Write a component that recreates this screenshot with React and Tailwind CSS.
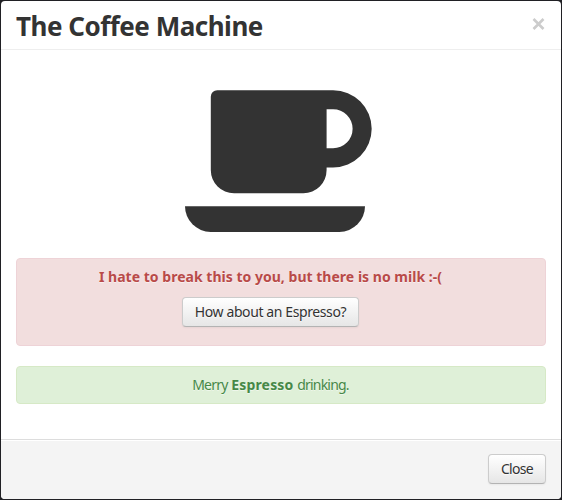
const button =
  "h-[30px] rounded border border-[#cccccc] border-b-[#b3b3b3] bg-gradient-to-b from-white to-[#e6e6e6] text-[14px] leading-5 text-[#333333] whitespace-nowrap shadow-[inset_0_1px_0_rgba(255,255,255,0.2),0_1px_2px_rgba(0,0,0,0.05)] [text-shadow:0_1px_1px_rgba(255,255,255,0.75)]";

function CoffeeIcon() {
  return (
    <svg className="block h-[142px] w-[187px]" viewBox="185 90 187 142" fill="#333333" aria-hidden="true">
      <path
        fillRule="evenodd"
        d="M217.400 90.200H333.100A38.600 38.600 0 0 1 333.100 167.400H326.600V170.100A23.200 23.200 0 0 1 303.400 193.300H234.000A23.200 23.200 0 0 1 210.800 170.100V96.700A6.500 6.500 0 0 1 217.300 90.200ZM326.600 109.300V148.300H333.100A19.500 19.500 0 0 0 333.100 109.300Z"
      />
      <path d="M185 206.200H365A25.700 25.700 0 0 1 339.300 231.900H210.700A25.700 25.700 0 0 1 185 206.200Z" />
    </svg>
  );
}

export default function App() {
  return (
    <div className="h-[500px] w-[562px] bg-[#202024] p-px font-['Noto_Sans',sans-serif] text-[14px] leading-5">
      <div className="flex h-[498px] flex-col overflow-hidden rounded-[4px] bg-white">
        <header className="flex h-[49px] shrink-0 justify-between border-b border-[#eeeeee] pr-[15px] pl-[15px]">
          <h3 className="mt-[5px] text-[26px] leading-[40px] font-bold tracking-[-0.49px] whitespace-nowrap text-[#333333]">
            The Coffee Machine
          </h3>
          <button aria-label="Close dialog" className="flex h-[45px] items-center text-[#cccccc]">
            <svg className="h-[12px] w-[14px]" viewBox="0 0 14 12" fill="none" stroke="currentColor" strokeWidth="2.6">
              <path d="M1.500 1L11.500 11M11.500 1L1.500 11" />
            </svg>
          </button>
        </header>
        <main className="flex grow flex-col px-[15px] pt-10">
          <div className="ml-[169px]">
            <CoffeeIcon />
          </div>
          <div className="mt-[26px] flex h-[88px] flex-col items-center rounded border border-[#eed3d7] bg-[#f2dede] pt-2 pr-[35px] pl-[14px] text-[#b94a48] [text-shadow:0_1px_0_rgba(255,255,255,0.5)]">
            <strong className="font-bold tracking-[0.02px] whitespace-nowrap">
              I hate to break this to you, but there is no milk :-(
            </strong>
            <button className={`${button} mt-[10px] w-[177px] tracking-[-0.4px]`}>How about an Espresso?</button>
          </div>
          <div className="mt-5 h-[38px] rounded border border-[#d6e9c6] bg-[#dff0d8] pt-2 pr-[35px] pl-[14px] text-center whitespace-nowrap text-[#468847] tracking-[-0.8px] [word-spacing:1px] [text-shadow:0_1px_0_rgba(255,255,255,0.5)]">
            Merry <strong className="font-bold tracking-[0.15px]">Espresso</strong> drinking.
          </div>
        </main>
        <footer className="flex h-[60px] shrink-0 justify-end border-t border-[#dddddd] bg-[#f4f4f4] pt-[14px] pr-[15px] shadow-[inset_0_1px_0_#fff]">
          <button className={`${button} w-[58px] tracking-[-0.7px]`}>Close</button>
        </footer>
      </div>
    </div>
  );
}
